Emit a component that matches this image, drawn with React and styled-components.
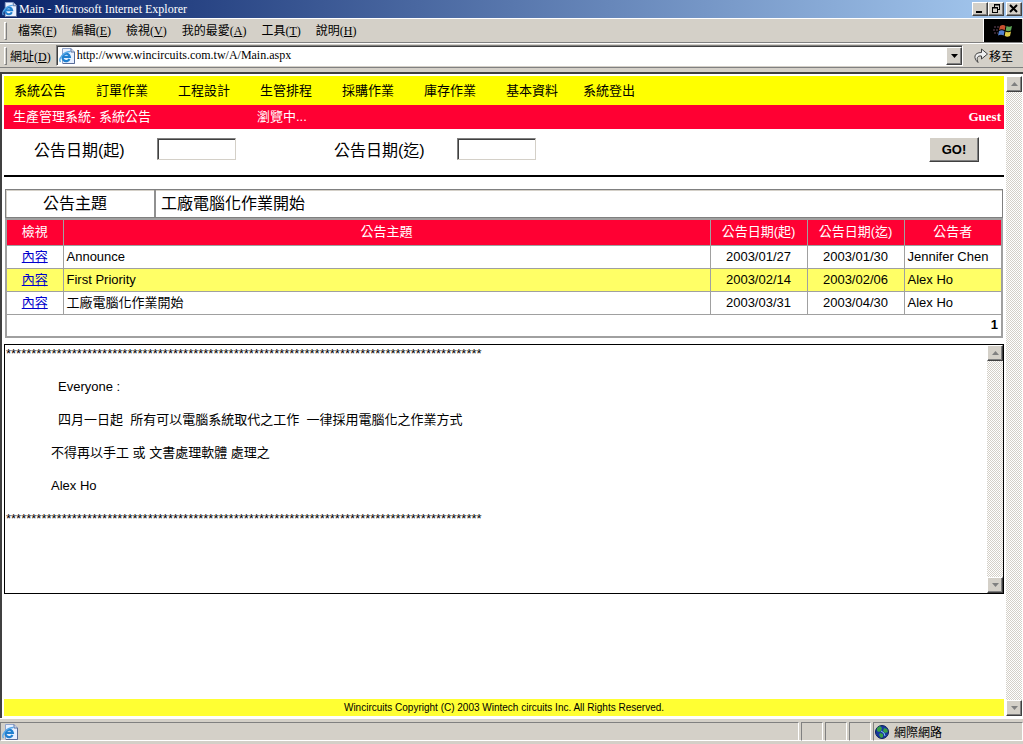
import React from 'react';
import styled, { createGlobalStyle, css } from 'styled-components';

const sans = '"Liberation Sans", "Noto Sans CJK TC", sans-serif';
const serif = '"Liberation Serif", "Noto Sans CJK TC", serif';
const face = '#d4d0c8';
const red = '#ff0033';

const GlobalStyle = createGlobalStyle`
  * {
    box-sizing: border-box;
  }
  body {
    margin: 0;
    background: ${face};
    color: black;
    font-family: ${sans};
    font-size: 13px;
  }
  button {
    font-family: inherit;
    color: inherit;
  }
`;

const raised = css`
  background: ${face};
  border: 1px solid;
  border-color: #fff #404040 #404040 #fff;
  box-shadow: inset -1px -1px 0 #808080;
`;

const Window = styled.div`
  display: flex;
  flex-direction: column;
  min-height: 100vh;
`;

// ---- browser chrome ----
const TitleBar = styled.header`
  display: flex;
  align-items: center;
  height: 18px;
  padding: 0 1px 0 2px;
  background: linear-gradient(to right, #0a246a, #a6caf0);
  color: white;
  font-family: ${serif};
  font-size: 12px;
  line-height: 18px;
`;
const WindowTitle = styled.h1`
  flex: 1;
  margin: 0 0 0 2px;
  font-size: 12px;
  font-weight: normal;
`;
const CaptionButton = styled.button`
  ${raised}
  width: 16px;
  height: 14px;
  padding: 0;
  margin-left: ${props => (props.$apart ? 2 : 0)}px;
  svg {
    display: block;
  }
`;
const Bar = styled.div`
  display: flex;
  align-items: center;
  height: 25px;
  padding: 0 1px 0 4px;
  border-top: 1px solid #fff;
  border-bottom: 1px solid #808080;
  font-family: ${serif};
  font-size: 12px;
`;
const Grip = styled.span`
  width: 3px;
  height: 18px;
  border: 1px solid;
  border-color: #fff #808080 #808080 #fff;
`;
const MenuList = styled.nav`
  display: flex;
  flex: 1;
  gap: 15px;
  padding-left: 11px;
`;
const MenuButton = styled.button`
  padding: 0;
  border: 0;
  background: none;
  font-size: 12px;
  line-height: 18px;
`;
const Throbber = styled.span`
  display: flex;
  align-items: center;
  justify-content: center;
  width: 39px;
  height: 23px;
  border-left: 1px solid #fff;
  background: black;
`;
const AddressLabel = styled.label`
  margin: 0 5px 0 3px;
`;
const AddressField = styled.div`
  display: flex;
  flex: 1;
  align-items: center;
  height: 21px;
  padding-left: 2px;
  border: 1px solid;
  border-color: #808080 #fff #fff #808080;
  box-shadow: inset 1px 1px 0 #404040;
  background: white;
`;
const AddressInput = styled.input`
  flex: 1;
  min-width: 0;
  padding: 0 2px;
  border: 0;
  outline: 0;
  background: none;
  font-family: ${serif};
  font-size: 12px;
`;
const DropButton = styled.button`
  ${raised}
  display: flex;
  align-items: center;
  justify-content: center;
  width: 16px;
  height: 18px;
  padding: 0;
`;
const GoLink = styled.button`
  display: flex;
  align-items: center;
  width: 59px;
  padding: 0 0 0 11px;
  border: 0;
  background: none;
  font-size: 12px;
`;

// ---- scroll bars ----
const Track = styled.div`
  display: flex;
  flex-direction: column;
  justify-content: space-between;
  flex: none;
  width: 16px;
  background: repeating-conic-gradient(#fff 0% 25%, ${face} 0% 50%) 0 0 / 2px 2px;
`;
const ScrollButton = styled.button`
  ${raised}
  display: flex;
  align-items: center;
  justify-content: center;
  width: 16px;
  height: 16px;
  padding: 0;
`;

// ---- page ----
const Viewport = styled.div`
  display: flex;
  flex: 1;
  gap: 2px;
  margin-top: 4px;
  padding: 2px 1px 2px 2px;
  border-top: 2px solid #404040;
  border-left: 2px solid #404040;
  background: white;
`;
const Page = styled.main`
  display: flex;
  flex: 1;
  flex-direction: column;
  min-width: 0;
`;
const SiteNav = styled.nav`
  display: flex;
  height: 29px;
  padding-left: 10px;
  background: #ffff00;
  line-height: 29px;
`;
const SiteLink = styled.a`
  width: ${props => props.$width}px;
  color: black;
  text-decoration: none;
`;
const StatusStrip = styled.div`
  display: grid;
  grid-template-columns: 244px 1fr auto;
  height: 24px;
  padding: 0 3px 0 9px;
  background: ${red};
  color: white;
  line-height: 23px;
`;
const UserName = styled.strong`
  font-family: ${serif};
`;
const Filters = styled.form`
  display: flex;
  align-items: center;
  height: 48px;
  padding: 0 25px 6px 30px;
  border-bottom: 2px solid black;
  font-size: 16px;
`;
const FilterLabel = styled.label`
  width: 123px;
`;
const DateInput = styled.input`
  width: 79px;
  height: 22px;
  margin-right: 98px;
  padding: 1px 2px;
  border: 1px solid;
  border-color: #808080 ${face} ${face} #808080;
  box-shadow: inset 1px 1px 0 #404040;
  font-size: 13px;
`;
const SubmitButton = styled.button`
  ${raised}
  width: 50px;
  height: 25px;
  margin-left: auto;
  padding: 0;
  font-size: 13px;
  font-weight: bold;
`;
const Subject = styled.dl`
  display: grid;
  grid-template-columns: 150px 1fr;
  height: 29px;
  margin: 12px 1px 0;
  border: 1px solid #808080;
  box-shadow: inset 1px 1px 0 ${face};
  font-size: 16px;
  line-height: 27px;
`;
const SubjectLabel = styled.dt`
  padding-right: 10px;
  border-right: 2px solid #909090;
  text-align: center;
`;
const SubjectText = styled.dd`
  margin: 0;
  padding-left: 5px;
`;
const Notices = styled.table`
  width: calc(100% - 2px);
  margin-left: 1px;
  border: 2px solid #a0a0a0;
  border-collapse: collapse;
  table-layout: fixed;
  line-height: 18px;
  th, td {
    padding: 0 3px;
    border: 1px solid #a0a0a0;
  }
  th {
    height: 26px;
    background: ${red};
    color: white;
    font-weight: normal;
  }
`;
const Row = styled.tr`
  height: 23px;
  background: ${props => (props.$marked ? '#ffff66' : 'white')};
`;
const Cell = styled.td`
  text-align: ${props => (props.$center ? 'center' : 'left')};
`;
const Col = styled.col`
  width: ${props => (props.$width ? `${props.$width}px` : 'auto')};
`;
const Pager = styled.td`
  height: 23px;
  text-align: right;
  font-weight: bold;
`;
const ViewLink = styled.a`
  color: #0000cc;
`;
const Message = styled.section`
  display: flex;
  height: 250px;
  margin-top: 6px;
  border: 1px solid black;
`;
const MessageBody = styled.div`
  flex: 1;
  min-width: 0;
  padding: 1px 0 0 1px;
  overflow: hidden;
`;
const Line = styled.p`
  margin: 0 0 18px;
  padding-left: ${props => props.$indent || 0}px;
  line-height: 15px;
  white-space: pre-wrap;
`;
const Footer = styled.footer`
  height: 17px;
  margin-top: auto;
  background: #ffff33;
  font-size: 10px;
  line-height: 17px;
  text-align: center;
`;

// ---- status bar ----
const StatusBar = styled.div`
  display: grid;
  grid-template-columns: 1fr 22px 22px 22px 150px;
  gap: 2px;
  height: 26px;
  padding: 3px 0 4px;
  border-top: 1px solid #fff;
  box-shadow: inset 0 -3px 0 ${face}, inset 0 -4px 0 #fff;
`;
const Panel = styled.div`
  display: flex;
  align-items: center;
  gap: 5px;
  padding-left: 1px;
  border: 1px solid;
  border-color: #808080 #fff #fff #808080;
  font-size: 12px;
`;

const Arrow = ({ up, color = '#808080' }) => (
  <svg width="7" height="4" viewBox="0 0 7 4" aria-hidden="true">
    <path d={up ? 'M0 4L3.5 0L7 4Z' : 'M0 0H7L3.5 4Z'} fill={color} />
  </svg>
);

const PageIcon = ({ size = 16 }) => (
  <svg width={size} height={size} viewBox="0 0 16 16" aria-hidden="true">
    <path d="M3.5 .5H12L15.5 4V15.5H3.5Z" fill="#e8f0ff" stroke="#90a4cc" />
    <path d="M12 .5V4H15.5V15.5H4" fill="none" stroke="#586c98" />
    <path d="M10.500 11A3.700 3.700 0 1 1 10.800 8.800H4" fill="none" stroke="#2080d0" strokeWidth="2.200" />
    <path d="M1.500 14C-1 10.500 5 3.500 11.500 3.500" fill="none" stroke="#58a8e8" strokeWidth="1.300" />
  </svg>
);

const FlagIcon = () => (
  <svg width="20" height="16" viewBox="0 0 20 16" aria-hidden="true">
    <path d="M7 3Q10 1 12.500 3L11.700 7.200Q9 5.500 6 7Z" fill="#c85030" />
    <path d="M13.500 3Q16 4.500 19 3L18 7.500Q15 9 12.700 7.500Z" fill="#60a858" />
    <path d="M6 8Q9 6.500 11.500 8.200L10.700 12.500Q8 11 5 12.500Z" fill="#5080d0" />
    <path d="M12.500 8.500Q15 10 18 8.500L17 13Q14 14.500 11.700 12.800Z" fill="#e0cc48" />
    <path d="M1 4H6M0 7H5M1 10H5" stroke="#684860" strokeDasharray="2 1" />
  </svg>
);

const GoIcon = () => (
  <svg width="15" height="16" viewBox="0 0 15 16" aria-hidden="true">
    <path
      d="M4 14.500C-1 10 0 4.500 7.500 4.500V1L13.500 6L7.500 11V8C3 7.500 2.500 10 4 14.500Z"
      fill="#f0f0f0"
      stroke="#404040"
    />
  </svg>
);

const GlobeIcon = () => (
  <svg width="14" height="14" viewBox="0 0 14 14" aria-hidden="true">
    <circle cx="7" cy="7" r="6.500" fill="#1838a0" stroke="#082058" />
    <path d="M2 3L5 1L7 3L6 6L4 7L2 6ZM9 3L12 4L13 7L10 8L8 6ZM5 8L8 9L8 12L6 13L4 10Z" fill="#38a048" />
    <path d="M6 6L9 8L10 11" fill="none" stroke="#80c8f0" />
  </svg>
);

const menus = [
  ['檔案', 'F'], ['編輯', 'E'], ['檢視', 'V'],
  ['我的最愛', 'A'], ['工具', 'T'], ['說明', 'H'],
];

const siteLinks = [
  ['系統公告', 82], ['訂單作業', 82], ['工程設計', 82], ['生管排程', 82],
  ['採購作業', 82], ['庫存作業', 82], ['基本資料', 77], ['系統登出', 77],
];

const notices = [
  { subject: 'Announce', from: '2003/01/27', to: '2003/01/30', author: 'Jennifer Chen' },
  { subject: 'First Priority', from: '2003/02/14', to: '2003/02/06', author: 'Alex Ho', marked: true },
  { subject: '工廠電腦化作業開始', from: '2003/03/31', to: '2003/04/30', author: 'Alex Ho' },
];

const stars = '*'.repeat(94);

const ScrollBar = () => (
  <Track>
    <ScrollButton type="button" aria-label="Scroll up"><Arrow up /></ScrollButton>
    <ScrollButton type="button" aria-label="Scroll down"><Arrow /></ScrollButton>
  </Track>
);

const Chrome = () => (
  <>
    <TitleBar>
      <PageIcon size={15} />
      <WindowTitle>Main - Microsoft Internet Explorer</WindowTitle>
      <CaptionButton type="button" aria-label="Minimize">
        <svg width="14" height="12"><path d="M3 9H9" stroke="black" strokeWidth="2" /></svg>
      </CaptionButton>
      <CaptionButton type="button" aria-label="Restore">
        <svg width="14" height="12">
          <path d="M5 2H11M10.500 2V7M5.500 2V4M9 6.500H11M3 5H9M3.500 5V10M8.500 5V10M3 9.500H9" fill="none" stroke="black" />
          <path d="M5 1.500H11M3 4.500H9" stroke="black" />
        </svg>
      </CaptionButton>
      <CaptionButton type="button" aria-label="Close" $apart>
        <svg width="14" height="12"><path d="M3 2L10 9M10 2L3 9" stroke="black" strokeWidth="2" /></svg>
      </CaptionButton>
    </TitleBar>
    <Bar>
      <Grip />
      <MenuList>
        {menus.map(([name, key]) => (
          <MenuButton type="button" key={key}>{name}(<u>{key}</u>)</MenuButton>
        ))}
      </MenuList>
      <Throbber><FlagIcon /></Throbber>
    </Bar>
    <Bar>
      <Grip />
      <AddressLabel htmlFor="address">網址(<u>D</u>)</AddressLabel>
      <AddressField>
        <PageIcon />
        <AddressInput id="address" defaultValue="http://www.wincircuits.com.tw/A/Main.aspx" />
        <DropButton type="button" aria-label="History"><Arrow color="black" /></DropButton>
      </AddressField>
      <GoLink type="button"><GoIcon />移至</GoLink>
    </Bar>
  </>
);

const NoticeTable = () => (
  <Notices>
    <colgroup>
      <Col $width={57} />
      <Col />
      <Col $width={97} />
      <Col $width={97} />
      <Col $width={98} />
    </colgroup>
    <thead>
      <tr>
        <th>檢視</th>
        <th>公告主題</th>
        <th>公告日期(起)</th>
        <th>公告日期(迄)</th>
        <th>公告者</th>
      </tr>
    </thead>
    <tbody>
      {notices.map(notice => (
        <Row key={notice.from} $marked={notice.marked}>
          <Cell $center><ViewLink href="#content">內容</ViewLink></Cell>
          <Cell>{notice.subject}</Cell>
          <Cell $center>{notice.from}</Cell>
          <Cell $center>{notice.to}</Cell>
          <Cell>{notice.author}</Cell>
        </Row>
      ))}
      <tr>
        <Pager colSpan={5}>1</Pager>
      </tr>
    </tbody>
  </Notices>
);

const App = () => (
  <Window>
    <GlobalStyle />
    <Chrome />
    <Viewport>
      <Page>
        <SiteNav>
          {siteLinks.map(([name, width]) => (
            <SiteLink href="#" key={name} $width={width}>{name}</SiteLink>
          ))}
        </SiteNav>
        <StatusStrip>
          <span>生產管理系統- 系統公告</span>
          <span>瀏覽中...</span>
          <UserName>Guest</UserName>
        </StatusStrip>
        <Filters onSubmit={evt => evt.preventDefault()}>
          <FilterLabel htmlFor="from">公告日期(起)</FilterLabel>
          <DateInput id="from" />
          <FilterLabel htmlFor="to">公告日期(迄)</FilterLabel>
          <DateInput id="to" />
          <SubmitButton>GO!</SubmitButton>
        </Filters>
        <Subject>
          <SubjectLabel>公告主題</SubjectLabel>
          <SubjectText>工廠電腦化作業開始</SubjectText>
        </Subject>
        <NoticeTable />
        <Message id="content">
          <MessageBody>
            <Line>{stars}</Line>
            <Line $indent={52}>Everyone :</Line>
            <Line $indent={52}>{'四月一日起  所有可以電腦系統取代之工作  一律採用電腦化之作業方式'}</Line>
            <Line $indent={45}>不得再以手工 或 文書處理軟體 處理之</Line>
            <Line $indent={45}>Alex Ho</Line>
            <Line>{stars}</Line>
          </MessageBody>
          <ScrollBar />
        </Message>
        <Footer>Wincircuits Copyright (C) 2003 Wintech circuits Inc. All Rights Reserved.</Footer>
      </Page>
      <ScrollBar />
    </Viewport>
    <StatusBar>
      <Panel><PageIcon /></Panel>
      <Panel />
      <Panel />
      <Panel />
      <Panel><GlobeIcon />網際網路</Panel>
    </StatusBar>
  </Window>
);

export default App;
